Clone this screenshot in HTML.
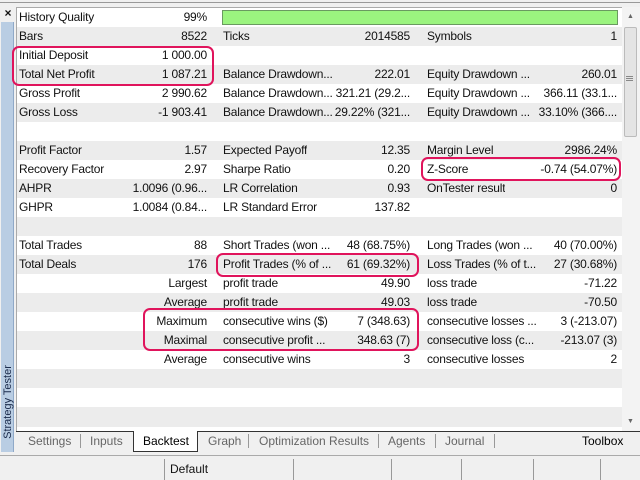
<!DOCTYPE html>
<html><head><style>
*{margin:0;padding:0;box-sizing:border-box}
body{width:640px;height:480px;overflow:hidden;background:#f0f0f0;font-family:"Liberation Sans",sans-serif;font-size:12px;color:#111;position:relative}
.abs{position:absolute}
.row{position:absolute;left:17px;width:605px;height:19px;line-height:19px;white-space:nowrap;letter-spacing:-0.2px}
.g{background:#ececec}
.row span{position:absolute;top:0}
.l1{left:2px}.v1{right:415px;text-align:right}
.l2{left:206px;max-width:124px;overflow:hidden}.v2{right:212px;text-align:right}
.l3{left:410px;max-width:124px;overflow:hidden}.v3{right:5px;text-align:right}
.rb{position:absolute;border:2.5px solid #e0145c;border-radius:7px}
.tab{position:absolute;top:434px;color:#666;font-size:12px}
.sep{position:absolute;width:1px;background:#999}
</style></head><body>
<div class="abs" style="left:0;top:2px;width:640px;height:1px;background:#999"></div>
<div class="abs" style="left:0;top:6px;width:16px;height:14px;font-size:12px;font-weight:bold;text-align:center;line-height:14px">×</div>
<div class="abs" style="left:1px;top:22px;width:13px;height:430px;background:#b9cde3;border-right:1px solid #8fa9c8"></div>
<div class="abs" style="left:-42px;top:395px;width:100px;height:14px;transform:rotate(-90deg);font-size:11px;color:#1a2a4a;text-align:center;line-height:14px">Strategy Tester</div>
<div class="abs" style="left:16px;top:7px;width:606px;height:424px;background:#fff;border-left:1px solid #aaa;border-top:1px solid #aaa"></div>
<div class="abs" style="left:622px;top:7px;width:18px;height:424px;background:#f3f3f3"></div>
<div class="abs" style="left:624px;top:27px;width:13px;height:110px;background:#e4e4e4;border:1px solid #bbb;border-radius:2px"></div>
<div class="abs" style="left:627px;top:13px;font-size:7px;color:#666">▲</div>
<div class="abs" style="left:627px;top:418px;font-size:7px;color:#666">▼</div>
<div class="abs" style="left:626px;top:76px;width:7px;height:1px;background:#888;box-shadow:0 2px #888,0 4px #888"></div>

<div class="row" style="top:8px"><span class="l1">History Quality</span><span class="v1">99%</span></div>
<div class="abs" style="left:222px;top:10px;width:396px;height:15px;background:#9bf47f;border:1px solid #6a9a60"></div>
<div class="row g" style="top:27px"><span class="l1">Bars</span><span class="v1">8522</span><span class="l2">Ticks</span><span class="v2">2014585</span><span class="l3">Symbols</span><span class="v3">1</span></div>
<div class="row" style="top:46px"><span class="l1">Initial Deposit</span><span class="v1">1 000.00</span></div>
<div class="row g" style="top:65px"><span class="l1">Total Net Profit</span><span class="v1">1 087.21</span><span class="l2">Balance Drawdown...</span><span class="v2">222.01</span><span class="l3">Equity Drawdown ...</span><span class="v3">260.01</span></div>
<div class="row" style="top:84px"><span class="l1">Gross Profit</span><span class="v1">2 990.62</span><span class="l2">Balance Drawdown...</span><span class="v2">321.21 (29.2...</span><span class="l3">Equity Drawdown ...</span><span class="v3">366.11 (33.1...</span></div>
<div class="row g" style="top:103px"><span class="l1">Gross Loss</span><span class="v1">-1 903.41</span><span class="l2">Balance Drawdown...</span><span class="v2">29.22% (321...</span><span class="l3">Equity Drawdown ...</span><span class="v3">33.10% (366....</span></div>
<div class="row" style="top:122px"></div>
<div class="row g" style="top:141px"><span class="l1">Profit Factor</span><span class="v1">1.57</span><span class="l2">Expected Payoff</span><span class="v2">12.35</span><span class="l3">Margin Level</span><span class="v3">2986.24%</span></div>
<div class="row" style="top:160px"><span class="l1">Recovery Factor</span><span class="v1">2.97</span><span class="l2">Sharpe Ratio</span><span class="v2">0.20</span><span class="l3">Z-Score</span><span class="v3">-0.74 (54.07%)</span></div>
<div class="row g" style="top:179px"><span class="l1">AHPR</span><span class="v1">1.0096 (0.96...</span><span class="l2">LR Correlation</span><span class="v2">0.93</span><span class="l3">OnTester result</span><span class="v3">0</span></div>
<div class="row" style="top:198px"><span class="l1">GHPR</span><span class="v1">1.0084 (0.84...</span><span class="l2">LR Standard Error</span><span class="v2">137.82</span></div>
<div class="row g" style="top:217px"></div>
<div class="row" style="top:236px"><span class="l1">Total Trades</span><span class="v1">88</span><span class="l2">Short Trades (won ...</span><span class="v2">48 (68.75%)</span><span class="l3">Long Trades (won ...</span><span class="v3">40 (70.00%)</span></div>
<div class="row g" style="top:255px"><span class="l1">Total Deals</span><span class="v1">176</span><span class="l2">Profit Trades (% of ...</span><span class="v2">61 (69.32%)</span><span class="l3">Loss Trades (% of t...</span><span class="v3">27 (30.68%)</span></div>
<div class="row" style="top:274px"><span class="v1">Largest</span><span class="l2">profit trade</span><span class="v2">49.90</span><span class="l3">loss trade</span><span class="v3">-71.22</span></div>
<div class="row g" style="top:293px"><span class="v1">Average</span><span class="l2">profit trade</span><span class="v2">49.03</span><span class="l3">loss trade</span><span class="v3">-70.50</span></div>
<div class="row" style="top:312px"><span class="v1">Maximum</span><span class="l2">consecutive wins ($)</span><span class="v2">7 (348.63)</span><span class="l3">consecutive losses ...</span><span class="v3">3 (-213.07)</span></div>
<div class="row g" style="top:331px"><span class="v1">Maximal</span><span class="l2">consecutive profit ...</span><span class="v2">348.63 (7)</span><span class="l3">consecutive loss (c...</span><span class="v3">-213.07 (3)</span></div>
<div class="row" style="top:350px"><span class="v1">Average</span><span class="l2">consecutive wins</span><span class="v2">3</span><span class="l3">consecutive losses</span><span class="v3">2</span></div>
<div class="row g" style="top:369px"></div>
<div class="row" style="top:388px"></div>
<div class="row g" style="top:407px;height:20px"></div>

<div class="rb" style="left:12px;top:46px;width:202px;height:40px"></div>
<div class="rb" style="left:216px;top:253px;width:203px;height:24px"></div>
<div class="rb" style="left:143px;top:308px;width:276px;height:43px"></div>
<div class="rb" style="left:421px;top:157px;width:200px;height:24px"></div>

<div class="abs" style="left:16px;top:431px;width:624px;height:1px;background:#333"></div>
<div class="abs" style="left:133px;top:431px;width:65px;height:21px;background:#fff;border:1px solid #333;border-top:none"></div>
<div class="tab" style="left:28px">Settings</div>
<div class="sep" style="left:80px;top:434px;height:14px"></div>
<div class="tab" style="left:90px">Inputs</div>
<div class="tab" style="left:143px;color:#000">Backtest</div>
<div class="tab" style="left:208px">Graph</div>
<div class="sep" style="left:248px;top:434px;height:14px"></div>
<div class="tab" style="left:259px">Optimization Results</div>
<div class="sep" style="left:378px;top:434px;height:14px"></div>
<div class="tab" style="left:388px">Agents</div>
<div class="sep" style="left:435px;top:434px;height:14px"></div>
<div class="tab" style="left:445px">Journal</div>
<div class="sep" style="left:494px;top:434px;height:14px"></div>
<div class="tab" style="left:582px;color:#000">Toolbox</div>

<div class="abs" style="left:0;top:455px;width:640px;height:1px;background:#aaa"></div>
<div class="sep" style="left:164px;top:459px;height:21px"></div>
<div class="abs" style="left:170px;top:462px;font-size:12px">Default</div>
<div class="sep" style="left:293px;top:459px;height:21px"></div>
<div class="sep" style="left:391px;top:459px;height:21px"></div>
<div class="sep" style="left:461px;top:459px;height:21px"></div>
<div class="sep" style="left:533px;top:459px;height:21px"></div>
<div class="sep" style="left:600px;top:459px;height:21px"></div>
</body></html>
